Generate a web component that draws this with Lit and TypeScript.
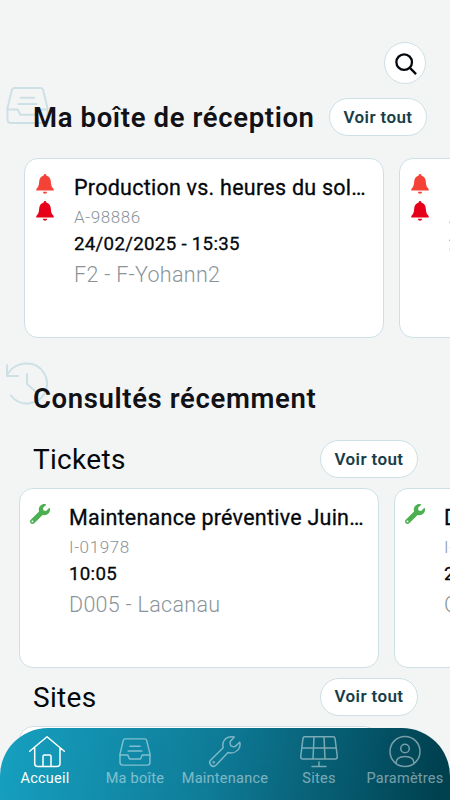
import { LitElement, html, svg, css } from "lit";
import { customElement, property } from "lit/decorators.js";

const trayIcon = svg`
  <path d="M9.5 2H36.5Q38.5 2 39 4L43.5 22.5V34.5Q43.5 38 40 38H6Q2.5 38 2.5 34.5V22.5L7 4Q7.5 2 9.5 2Z"/>
  <path d="M2.5 24H13L15.5 29.5H30.5L33 24H43.5"/><path d="M16 12H30M13.5 18.5H32.5"/>`;

const bellPath = svg`<path d="M9 0C9.8 0 10.3.6 10.3 1.4C13.300 2.200 14.600 4.600 14.800 7.500C15 11 15.500 12.800 17.300 14.500Q17.800 15.200 17.800 16.400H.2Q.2 15.200.7 14.500C2.500 12.800 3 11 3.200 7.500C3.400 4.600 4.700 2.200 7.700 1.400C7.700.6 8.200 0 9 0ZM6.800 17.700H11.200Q10.900 19.700 9 19.700T6.800 17.700Z"/>`;

interface Entry {
  title: string;
  code: string;
  date: string;
  place: string;
}

@customElement("info-card")
class InfoCard extends LitElement {
  @property() kind = "alert";
  @property({ attribute: false }) entry!: Entry;

  static styles = css`
    :host {
      display: flex;
      flex: none;
      box-sizing: border-box;
      width: 360px;
      height: 180px;
      background: #fff;
      border: 1px solid #cde0e6;
      border-radius: 14px;
    }
    .icons {
      display: flex;
      flex-direction: column;
      align-items: center;
      gap: 7px;
      width: 40px;
      margin-right: 9px;
      padding-top: 15px;
      flex: none;
    }
    .bell { display: block; width: 18px; height: 20px; fill: #f44336; }
    .bell.dark { fill: #e60019; }
    .wrench { display: block; width: 20px; height: 20px; fill: #4caf50; margin-right: 1px; }
    .text { flex: 1; min-width: 0; display: flex; flex-direction: column; padding: 14px 13px 0 0; white-space: nowrap; }
    .title { font-size: 21.500px; line-height: 29px; padding-bottom: 1px; letter-spacing: 0.25px; overflow: hidden; text-overflow: ellipsis; font-weight: 400; -webkit-text-stroke: 0.3px currentColor; }
    .code { font-size: 17px; line-height: 26px; padding-top: 1px; letter-spacing: 0.6px; color: #8a9498; font-weight: 300; }
    .date { font-size: 18.700px; line-height: 26px; padding-top: 1px; letter-spacing: 0.3px; font-weight: 400; -webkit-text-stroke: 0.3px currentColor; }
    .place { font-size: 21.500px; line-height: 34px; padding-top: 1px; letter-spacing: 0.3px; color: #8a9498; font-weight: 300; }
  `;

  render() {
    return html`
      <div class="icons">
        ${this.kind === "alert"
          ? html`<svg class="bell" viewBox="0 0 18 20">${bellPath}</svg>
              <svg class="bell dark" viewBox="0 0 18 20">${bellPath}</svg>`
          : html`<svg class="wrench" viewBox="0 0 512 512"><path d="M507.700 109.100c-2.200-9-13.500-12.100-20.100-5.500l-74.400 74.400-67.900-11.300L334 98.900l74.400-74.400c6.600-6.600 3.400-17.900-5.700-20.200-47.400-11.700-99.600.9-136.600 37.900-39.600 39.600-50.500 97.100-34.100 147.200L18.700 402.800c-25 25-25 65.500 0 90.500s65.500 25 90.500 0l213.200-213.200c50.100 16.700 107.500 5.700 147.400-34.200 37.100-37.100 49.700-89.300 37.900-136.800zM64 472c-13.300 0-24-10.700-24-24s10.700-24 24-24 24 10.700 24 24-10.700 24-24 24z"/></svg>`}
      </div>
      <div class="text">
        <div class="title">${this.entry.title}</div>
        <div class="code">${this.entry.code}</div>
        <div class="date">${this.entry.date}</div>
        <div class="place">${this.entry.place}</div>
      </div>`;
  }
}

@customElement("tab-bar")
class TabBar extends LitElement {
  static styles = css`
    :host {
      display: grid;
      grid-template-columns: 90px 90px 94px 90px 86px;
      height: 72px;
      background: linear-gradient(100deg, #16a0c0, #0f7c98 47%, #004150 97%);
      border-radius: 48px 48px 0 0;
      color: #fff;
      overflow: hidden;
    }
    .tab { display: flex; flex-direction: column; align-items: center; padding-top: 7px; opacity: 0.46; }
    .tab:nth-child(3) { padding-right: 4px; }
    .tab:nth-child(5) { padding-right: 4px; }
    .tab.active { opacity: 1; }
    svg { display: block; width: 42px; height: 34px; flex: none; fill: none; stroke: currentColor; stroke-width: 1.500; stroke-linecap: round; stroke-linejoin: round; }
    .label { font-size: 14.500px; line-height: 19px; letter-spacing: 0.25px; white-space: nowrap; }
  `;

  render() {
    const tabs = [
      { label: "Accueil", icon: svg`<path d="M5.700 16.300L23 1.700L40.300 16.300M10.700 13V28.500Q10.700 31.500 13.700 31.500H33Q36 31.500 36 28.500V13M19 31.500V21.500Q19 20 20.500 20H25.500Q27 20 27 21.500V31.500"/>` },
      { label: "Ma boîte", icon: svg`<g transform="translate(4.200 2.400) scale(.73)" stroke-width="2">${trayIcon}</g>` },
      { label: "Maintenance", icon: svg`<path d="M30.300 2C26.500 1 21.800 2.300 19.800 6C18.500 8.500 18.700 10.800 19.200 12.700L7 24.800C3.500 28.500 8.500 33.500 12.200 30L24 17.600C28 18.600 32.500 17 34.700 13.800C36 11.700 36.400 9.300 35.700 7.300L31 11.600Q28.500 12 26.800 10.700Q25.800 8.500 26.200 6.500Z"/><circle cx="9.700" cy="27.300" r=".5"/>` },
      { label: "Sites", icon: svg`<path d="M6.700 1.800H35.300Q36.700 1.800 37 3.200L39.300 21.500Q39.300 24 37.300 24H4.700Q2.700 24 2.700 21.500L5 3.200Q5.300 1.800 6.700 1.800ZM4 13H38M16 1.800L15 24M26 1.800L27 24M21 27V31.500M14 31.500H28"/>` },
      { label: "Paramètres", icon: svg`<circle cx="21" cy="16.500" r="15"/><circle cx="21" cy="13.500" r="4.300"/><path d="M12 28.500C12 23 16 21.500 21 21.500S30 23 30 28.500"/>` },
    ];
    return tabs.map(
      (tab, i) => html`<div class="tab ${i === 0 ? "active" : ""}">
        <svg viewBox="0 0 42 34">${tab.icon}</svg>
        <span class="label">${tab.label}</span>
      </div>`
    );
  }
}

@customElement("app-root")
class AppRoot extends LitElement {
  static styles = css`
    :host {
      display: grid;
      grid-template-columns: 450px;
      grid-template-rows: minmax(0, 1fr) 72px;
      height: 800px;
      width: 450px;
      overflow: hidden;
      background: #f3f5f5;
      color: #04080c;
      font-family: Roboto, sans-serif;
    }
    .page { display: flex; flex-direction: column; min-width: 0; }
    .top { display: flex; justify-content: flex-end; padding: 42px 24px 0 0; }
    .search { display: grid; place-items: center; width: 40px; height: 40px; background: #fff; border: 1px solid #cde0e6; border-radius: 50%; }
    .search svg { display: block; width: 22px; height: 22px; margin: 1px 0 0 1px; fill: none; stroke: #04080c; stroke-width: 2.500; }
    .head { position: relative; display: flex; align-items: center; justify-content: space-between; padding-left: 33px; flex: none; }
    .inbox { height: 38px; margin-top: 14px; padding-right: 23px; }
    .recent { height: 38px; margin-top: 41px; }
    .tickets { height: 38px; margin-top: 23px; padding-right: 32px; }
    .sites { height: 38px; margin-top: 10px; padding-right: 32px; }
    .deco { position: absolute; fill: none; stroke: #cde0e6; stroke-width: 2; stroke-linecap: round; stroke-linejoin: round; }
    .deco.tray { left: 5px; top: -12px; width: 45px; height: 39px; }
    .deco.clock { left: 4px; top: -18px; width: 46px; height: 44px; }
    .h1 { position: relative; font-size: 27.500px; line-height: 38px; padding-top: 1px; font-weight: 600; letter-spacing: 0.63px; color: #111116; white-space: nowrap; }
    .h2 { font-size: 28px; line-height: 38px; font-weight: 400; padding-top: 1px; letter-spacing: 0.3px; }
    .sites .h2, .sites .all { line-height: 35px; }
    .all { box-sizing: border-box; width: 98px; height: 38px; line-height: 36px; text-align: center; border: 1px solid #cde0e6; border-radius: 19px; background: #fff; color: #183e49; font-size: 17px; font-weight: 600; letter-spacing: 0.4px; }
    .row { display: flex; gap: 15px; flex: none; overflow: hidden; }
    .alerts { margin-top: 22px; padding-left: 24px; }
    .ticket-row { margin-top: 10px; padding-left: 19px; }
    .site-row { margin-top: 10px; padding-left: 19px; }
    .site { box-sizing: border-box; width: 360px; height: 80px; flex: none; background: #fff; border: 1px solid #cde0e6; border-radius: 14px; }
    tab-bar { position: relative; }
  `;

  render() {
    const alerts: Entry[] = [
      { title: "Production vs. heures du soleil", code: "A-98886", date: "24/02/2025 - 15:35", place: "F2 - F-Yohann2" },
      { title: "Production", code: "A-98885", date: "24/02/2025", place: "C2" },
    ];
    const tickets: Entry[] = [
      { title: "Maintenance préventive Juin 2025", code: "I-01978", date: "10:05", place: "D005 - Lacanau" },
      { title: "Diagnostic", code: "I-01977", date: "24/02/2025", place: "C001" },
    ];
    return html`
      <div class="page">
        <div class="top">
          <div class="search"><svg viewBox="0 0 24 24"><circle cx="10" cy="10" r="8.500"/><path d="M16 16L23 23"/></svg></div>
        </div>
        <div class="head inbox">
          <svg class="deco tray" viewBox="0 0 46 40">${trayIcon}</svg>
          <span class="h1">Ma boîte de réception</span>
          <span class="all">Voir tout</span>
        </div>
        <div class="row alerts">${alerts.map((e) => html`<info-card kind="alert" .entry=${e}></info-card>`)}</div>
        <div class="head recent">
          <svg class="deco clock" viewBox="0 0 46 44"><path d="M3 4V15H14M3 15C6 7 14 2.500 23 2.500A20 20 0 1 1 7 34.500M23 13V23L31 30"/></svg>
          <span class="h1">Consultés récemment</span>
        </div>
        <div class="head tickets"><span class="h2">Tickets</span><span class="all">Voir tout</span></div>
        <div class="row ticket-row">${tickets.map((e) => html`<info-card kind="ticket" .entry=${e}></info-card>`)}</div>
        <div class="head sites"><span class="h2">Sites</span><span class="all">Voir tout</span></div>
        <div class="row site-row"><div class="site"></div></div>
      </div>
      <tab-bar></tab-bar>`;
  }
}
